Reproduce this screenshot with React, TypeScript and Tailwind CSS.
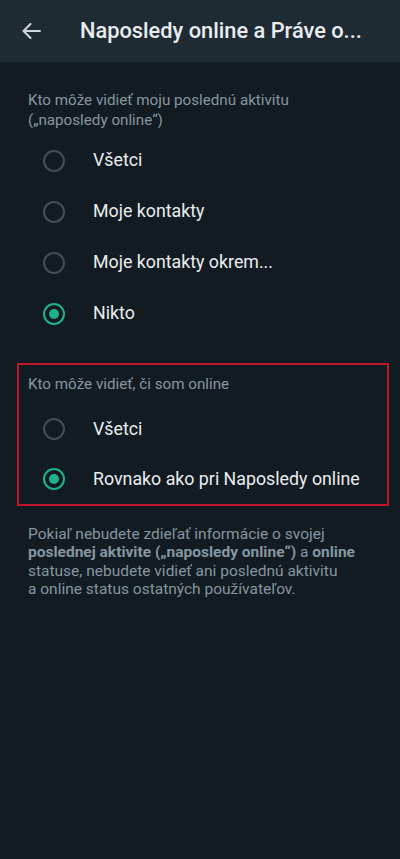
type Option = { label: string; checked?: boolean };

const lastSeen: Option[] = [
  { label: "Všetci" },
  { label: "Moje kontakty" },
  { label: "Moje kontakty okrem..." },
  { label: "Nikto", checked: true },
];

const online: Option[] = [
  { label: "Všetci" },
  { label: "Rovnako ako pri Naposledy online", checked: true },
];

function Radio({ checked }: { checked?: boolean }) {
  return (
    <div
      className={`flex h-[22px] w-[22px] items-center justify-center rounded-full border-[2.5px] ${
        checked ? "border-[#1fb08c]" : "border-[#434f57]"
      }`}
    >
      {checked && <div className="h-[10px] w-[10px] rounded-full bg-[#1fb08c]" />}
    </div>
  );
}

function OptionRow({ option, h }: { option: Option; h: string }) {
  return (
    <div className={`flex items-center ${h}`}>
      <div className="flex w-[66px] justify-end pr-[1px]">
        <Radio checked={option.checked} />
      </div>
      <span className="pl-[27px] text-[17.8px] text-[#e9edef]">{option.label}</span>
    </div>
  );
}

export default function App() {
  return (
    <div
      className="min-h-[859px] w-[400px] bg-[#121b22]"
      style={{ fontFamily: "Roboto, 'Noto Sans', sans-serif" }}
    >
      {/* Header */}
      <header className="flex h-[62px] items-center bg-[#1f2b33]">
        <div className="flex w-[80px] pl-[22px]">
          <svg width="19" height="16" viewBox="0 0 19 16" fill="none" className="text-[#d1d7db]">
            <path
              d="M18 8H1.5M8.5 1L1.5 8l7 7"
              stroke="currentColor"
              strokeWidth="2"
              strokeLinecap="round"
              strokeLinejoin="round"
            />
          </svg>
        </div>
        <h1 className="truncate text-[21.8px] font-medium text-[#e9edef]">
          Naposledy online a Práve o...
        </h1>
      </header>

      <div className="pt-[28px]">
        <p className="px-[28px] text-[15.2px] leading-[20px] text-[#8696a0]">
          Kto môže vidieť moju poslednú aktivitu
          <br />
          („naposledy online“)
        </p>
        <div className="mt-[5px]">
          {lastSeen.map((o, i) => (
            <OptionRow key={i} option={o} h="h-[51px]" />
          ))}
        </div>
      </div>

      {/* Highlighted section */}
      <div className="mx-[17px] mt-[24px] w-[372px] border-2 border-[#c0162b] pt-[9px]">
        <p className="px-[9px] text-[15.2px] leading-[20px] text-[#8696a0]">
          Kto môže vidieť, či som online
        </p>
        <div className="-ml-[19px] mt-[10px]">
          {online.map((o, i) => (
            <OptionRow key={i} option={o} h="h-[50px]" />
          ))}
        </div>
      </div>

      <p className="px-[28px] pt-[19px] text-[15.5px] leading-[18.4px] text-[#8696a0]">
        Pokiaľ nebudete zdieľať informácie o svojej
        <br />
        <span className="font-bold">poslednej aktivite („naposledy online“)</span> a{" "}
        <span className="font-bold">online</span>
        <br />
        statuse, nebudete vidieť ani poslednú aktivitu
        <br />a online status ostatných používateľov.
      </p>
    </div>
  );
}
